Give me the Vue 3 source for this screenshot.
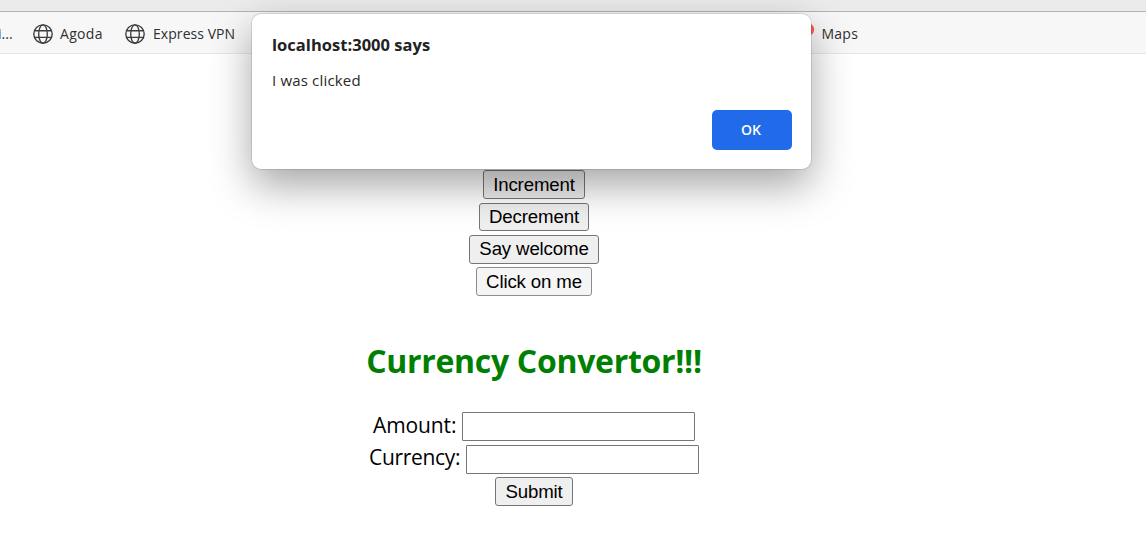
<script setup>
const actions = [
  { label: 'Increment', name: 'increment' },
  { label: 'Decrement', name: 'decrement' },
  { label: 'Say welcome', name: 'welcome' },
  { label: 'Click on me', name: 'click' },
]
</script>

<template>
  <div class="window">
    <div class="toolbar"></div>
    <nav class="bookmarks">
      <span class="bm cut">i...</span>
      <svg class="globe" viewBox="0 0 20 20"><g fill="none" stroke="#3d3d3d" stroke-width="1.35"><circle cx="10" cy="10" r="9.2" /><ellipse cx="10" cy="10" rx="4.3" ry="9.2" /><path d="M1.6 6.7h16.8M1.6 13.3h16.8" /></g></svg>
      <span class="bm agoda">Agoda</span>
      <svg class="globe" viewBox="0 0 20 20"><g fill="none" stroke="#3d3d3d" stroke-width="1.35"><circle cx="10" cy="10" r="9.2" /><ellipse cx="10" cy="10" rx="4.3" ry="9.2" /><path d="M1.6 6.7h16.8M1.6 13.3h16.8" /></g></svg>
      <span class="bm vpn">Express VPN</span>
      <svg class="pin" viewBox="0 0 14 20"><circle cx="7" cy="6.5" r="6.2" fill="#ff5f55" /><path d="M2 10h7C8 13 7.500 15 7 18 6 14 4 13 2 10z" fill="#34a853" /></svg>
      <span class="bm maps">Maps</span>
    </nav>
    <main class="page">
      <div class="actions">
        <button v-for="a in actions" :key="a.name" :class="['btn', a.name]">{{ a.label }}</button>
      </div>
      <h1><span>Currency Convertor!!!</span></h1>
      <form @submit.prevent>
        <div class="field"><label class="amount" for="amount">Amount:</label><input id="amount" type="text" /></div>
        <div class="field"><label class="currency" for="currency">Currency:</label><input id="currency" type="text" /></div>
        <button class="btn submit">Submit</button>
      </form>
    </main>
    <section class="dialog" role="alertdialog">
      <h2><span>localhost:3000 says</span></h2>
      <p><span>I was clicked</span></p>
      <button class="ok">OK</button>
    </section>
  </div>
</template>

<style>
body { margin: 0; background: #fff; overflow: hidden; }
</style>

<style scoped>
.window { position: relative; width: 1146px; height: 557px; overflow: hidden; font-family: "Segoe UI", "Open Sans", "Noto Sans", sans-serif; color: #000; background: #fff; }
.toolbar { box-sizing: border-box; height: 12px; background: #ebebeb; border-bottom: 1px solid #b3b3b3; }
.bookmarks { box-sizing: border-box; height: 42px; display: flex; align-items: center; background: #f7f7f7; border-bottom: 1px solid #e7e7e7; }
.bm { font-size: 14px; line-height: 20px; color: #303030; white-space: nowrap; flex: none; position: relative; top: 1px; }
.cut { width: 33px; text-indent: -2px; }
.globe { width: 20px; height: 20px; flex: none; position: relative; top: 1px; }
.agoda { width: 65px; padding-left: 7px; box-sizing: border-box; margin-right: 7px; letter-spacing: 0.3px; }
.vpn { width: 656px; padding-left: 8px; box-sizing: border-box; letter-spacing: 0.06px; }
.pin { width: 14px; height: 20px; flex: none; }
.maps { margin-left: 6.5px; letter-spacing: 0.25px; }
.page { width: 1068px; padding-top: 116px; box-sizing: border-box; text-align: center; }
.actions { display: flex; flex-direction: column; align-items: center; gap: 4px; }
.btn { display: block; box-sizing: border-box; height: 29px; padding: 0; font: 18.67px/25px "Liberation Sans", Arial, sans-serif; letter-spacing: -0.15px; color: #000; background: #efefef; border: 1.4px solid #767676; border-radius: 3px; white-space: nowrap; }
.increment { width: 102px; }
.decrement { width: 110px; height: 28px; padding-bottom: 1px; }
.welcome { width: 130px; padding-bottom: 2px; margin-bottom: -1px; }
.click { width: 116px; background: #f5f5f5; border-color: #8d8d8d; }
h1 { margin: 42px 0 29px; height: 45px; font-size: 32px; line-height: 45px; font-weight: 700; color: #008000; letter-spacing: -0.3px; white-space: nowrap; }
.field { display: flex; justify-content: center; height: 29px; margin-bottom: 4px; }
.field label { font-size: 21px; line-height: 26px; white-space: nowrap; text-align: left; }
.field .amount { width: 89px; letter-spacing: -0.1px; }
.field .currency { width: 97px; line-height: 25px; letter-spacing: -0.33px; }
.field input { box-sizing: border-box; width: 233px; height: 29px; border: 1.4px solid #767676; border-radius: 1px; background: #fff; padding: 0; outline: none; }
.submit { width: 78px; margin: -1px auto 0; }
.dialog { position: absolute; left: 252px; top: 14px; width: 559px; height: 155px; box-sizing: border-box; padding: 20px; border-radius: 9px; background: #fff; box-shadow: 0 0 0 1px rgba(0, 0, 0, .1), 0 16px 42px rgba(0, 0, 0, .36); }
h2 { margin: 0; font-size: 16.5px; line-height: 22px; font-weight: 700; color: #222; letter-spacing: 0.03px; white-space: nowrap; }
p { margin: 14px 0 0; font-size: 15px; line-height: 20px; color: #292929; letter-spacing: 0.17px; white-space: nowrap; }
.ok { display: block; margin: 20px 0 0 440px; width: 80px; height: 40px; padding: 0 2px 0 0; border: 0; border-radius: 5px; background: #216aea; color: #fff; font: 600 14px/40px "Open Sans", sans-serif; }
</style>
